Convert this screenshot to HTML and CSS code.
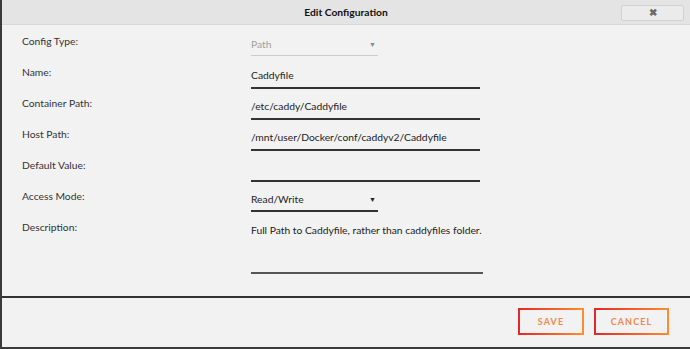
FILE: index.html
```html
<!DOCTYPE html>
<html lang="en">
<head>
  <meta charset="UTF-8">
  <title>Edit Configuration</title>
  <link rel="stylesheet" href="styles.css">
</head>
<body>

  <div class="dialog">
    <div class="titlebar">
      <span class="title">Edit Configuration</span>
      <button class="close">&#10006;</button>
    </div>

    <div class="content">
      <div class="row">
        <label>Config Type:</label>
        <div class="select disabled"><span>Path</span><span class="arrow">&#9660;</span></div>
      </div>
      <div class="row">
        <label>Name:</label>
        <div class="input">Caddyfile</div>
      </div>
      <div class="row">
        <label>Container Path:</label>
        <div class="input">/etc/caddy/Caddyfile</div>
      </div>
      <div class="row">
        <label>Host Path:</label>
        <div class="input">/mnt/user/Docker/conf/caddyv2/Caddyfile</div>
      </div>
      <div class="row">
        <label>Default Value:</label>
        <div class="input"></div>
      </div>
      <div class="row">
        <label>Access Mode:</label>
        <div class="select"><span>Read/Write</span><span class="arrow">&#9660;</span></div>
      </div>
      <div class="row">
        <label>Description:</label>
        <div class="textarea">Full Path to Caddyfile, rather than caddyfiles folder.</div>
      </div>
    </div>

    <div class="buttons">
      <button class="btn save">SAVE</button>
      <button class="btn cancel">CANCEL</button>
    </div>
  </div>

</body>
</html>
```

FILE: styles.css
```css
body {
  margin: 0;
  font-family: Lato, "Open Sans", sans-serif;
  font-size: 10.3px;
  color: #222;
  background: #f2f2f2;
}

.dialog {
  width: 688px;
  height: 347px;
  border-left: 2px solid #3a3a3a;
  border-bottom: 2px solid #3a3a3a;
  background: #f2f2f2;
  display: flex;
  flex-direction: column;
}

.titlebar {
  height: 24px;
  flex: none;
  background: #e4e4e4;
  border-bottom: 1px solid #d8d8d8;
  display: flex;
  align-items: center;
  justify-content: center;
  position: relative;
}

.title {
  font-weight: bold;
  font-size: 10.3px;
  color: #111;
}

.close {
  position: absolute;
  right: 6px;
  top: 5px;
  width: 63px;
  height: 16px;
  padding: 0;
  border: 1px solid #d2d2d2;
  border-radius: 2px;
  background: #ebebeb;
  color: #6a6a6a;
  font-size: 10px;
  font-weight: bold;
  line-height: 14px;
}

.content {
  box-sizing: border-box;
  height: 273px;
  flex: none;
  padding: 6px 0 0 20px;
  border-bottom: 2px solid #333;
}

.row {
  display: flex;
  height: 31px;
  line-height: 15px;
}

label {
  width: 229px;
  padding-top: 3px;
  color: #333;
}

.input {
  box-sizing: border-box;
  width: 229px;
  height: 27px;
  padding-top: 6px;
  border-bottom: 2px solid #333;
  color: #222;
}

.select {
  box-sizing: border-box;
  width: 127px;
  height: 26px;
  padding-top: 6px;
  border-bottom: 2px solid #333;
  display: flex;
  justify-content: space-between;
}

.select.disabled {
  color: #a0a0a0;
  height: 25px;
  border-bottom: 1px solid #ccc;
}

.arrow {
  font-size: 7px;
  padding-right: 2px;
}

.select.disabled .arrow {
  color: #888;
}

.textarea {
  box-sizing: border-box;
  width: 232px;
  height: 57px;
  padding-top: 6px;
  white-space: nowrap;
  border-bottom: 2px solid #555;
}

.buttons {
  display: flex;
  justify-content: flex-end;
  gap: 10px;
  padding: 10px 21px 0 0;
}

.btn {
  height: 27px;
  padding: 0;
  background: #f2f2f2;
  border: 2px solid;
  border-image: linear-gradient(90deg, #e22828, #ff8c2f) 1;
  font-family: Lato, "Open Sans", sans-serif;
  font-weight: bold;
  font-size: 9px;
  letter-spacing: 1.1px;
  color: #f5874a;
}

.save {
  width: 66px;
}

.cancel {
  width: 75px;
}
```
